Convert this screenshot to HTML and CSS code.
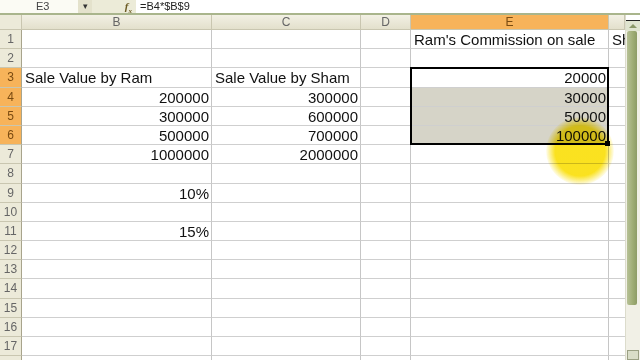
FILE: index.html
```html
<!DOCTYPE html>
<html lang="en">

<head>
  <meta charset="UTF-8" />
  <meta name="viewport" content="width=device-width, initial-scale=1.0" />
  <title>Commission Sheet</title>
  <link rel="stylesheet" href="styles.css">
</head>

<body>
  <div class="formula-bar">
    <div class="name-box">E3</div>
    <div class="name-drop">&#9662;</div>
    <div class="fx-area"><span class="fx">f<sub>x</sub></span></div>
    <div class="formula">=B4*$B$9</div>
  </div>

  <div class="workspace">
    <div class="sheet" id="sheet">
      <div class="selection"></div>
      <div class="spot"></div>
    </div>

    <div class="vscroll">
      <div class="scroll-gap"></div>
      <div class="scroll-up"></div>
      <div class="scroll-thumb"></div>
      <div class="scroll-track"></div>
      <div class="scroll-down"></div>
    </div>
  </div>

  <script>
    const sheet = document.getElementById('sheet');
    const cols = ['B', 'C', 'D', 'E', 'F'];

    // isi sel: [baris][kolom] = { t: teks, n: angka rata kanan }
    const data = {
      1: { E: { t: "Ram's Commission on sale" }, F: { t: "Sham's Commission on sale" } },
      3: { B: { t: 'Sale Value by Ram' }, C: { t: 'Sale Value by Sham' }, E: { t: '20000', n: true } },
      4: { B: { t: '200000', n: true }, C: { t: '300000', n: true }, E: { t: '30000', n: true } },
      5: { B: { t: '300000', n: true }, C: { t: '600000', n: true }, E: { t: '50000', n: true } },
      6: { B: { t: '500000', n: true }, C: { t: '700000', n: true }, E: { t: '100000', n: true } },
      7: { B: { t: '1000000', n: true }, C: { t: '2000000', n: true } },
      9: { B: { t: '10%', n: true } },
      11: { B: { t: '15%', n: true } }
    };

    function cell(cls, text) {
      const el = document.createElement('div');
      el.className = cls;
      if (text) el.textContent = text;
      sheet.appendChild(el);
    }

    cell('corner');
    cols.forEach(c => cell('col-hdr' + (c === 'E' ? ' sel' : ''), c === 'F' ? '' : c));

    for (let r = 1; r <= 18; r++) {
      const picked = r >= 3 && r <= 6;
      cell('row-hdr' + (picked ? ' sel' : ''), String(r));
      cols.forEach(c => {
        const v = (data[r] || {})[c];
        let cls = 'cell';
        if (v && v.n) cls += ' num';
        if (c === 'E' && r >= 4 && r <= 6) cls += ' range';
        if (c === 'F') cls += ' clip';
        cell(cls, v ? v.t : '');
      });
    }
  </script>
</body>

</html>
```

FILE: styles.css
```css
body {
  margin: 0;
  width: 640px;
  height: 360px;
  overflow: hidden;
  background: #fff;
  font-family: "Liberation Sans", Arial, sans-serif;
}

/* Baris rumus di atas */
.formula-bar {
  display: flex;
  height: 13px;
  background: #f6f5ea;
  border-bottom: 2px solid #a9b58c;
  font-size: 11px;
  line-height: 13px;
  color: #444;
}

.name-box {
  width: 78px;
  padding-left: 36px;
  box-sizing: border-box;
  background: #fbfbf4;
}

.name-drop {
  width: 14px;
  background: #e4e2cc;
  font-size: 9px;
  text-align: center;
  color: #333;
}

.fx-area {
  width: 44px;
  background: #ecebd8;
  text-align: right;
  padding-right: 4px;
  box-sizing: border-box;
}

.fx {
  font-family: "Liberation Serif", serif;
  font-style: italic;
  font-weight: bold;
  color: #6b5a22;
}

.fx sub {
  font-size: 7px;
}

.formula {
  flex: 1;
  background: #fff;
  padding-left: 4px;
  color: #222;
}

.workspace {
  display: flex;
}

/* Lembar kerja */
.sheet {
  position: relative;
  display: grid;
  grid-template-columns: 22px 190px 149px 50px 198px 16px;
  grid-template-rows: 15px;
  grid-auto-rows: 19.2px;
  width: 625px;
}

.corner,
.col-hdr,
.row-hdr {
  background: #ecead9;
  color: #666;
  font-size: 12px;
  text-align: center;
  box-sizing: border-box;
  border-right: 1px solid #c9c6b0;
  border-bottom: 1px solid #c9c6b0;
}

.col-hdr {
  line-height: 14px;
  background: linear-gradient(#f2f0e4, #e3e0cc);
}

.row-hdr {
  line-height: 19px;
  border-right: 1px solid #a8a48c;
}

.col-hdr.sel,
.row-hdr.sel {
  background: #f7b35a;
  color: #7a4a10;
}

.cell {
  box-sizing: border-box;
  border-right: 1px solid #c6c6c6;
  border-bottom: 1px solid #cfcfcf;
  font-size: 15px;
  line-height: 19px;
  padding: 0 2px 0 3px;
  white-space: nowrap;
  color: #111;
}

.cell.num {
  text-align: right;
}

.cell.range {
  background: #d6d4c8;
}

.cell.clip {
  overflow: hidden;
  border-right: none;
}

/* bingkai pilihan E3:E6, menumpuk di atas sel */
.selection {
  position: absolute;
  grid-column: 5 / 6;
  grid-row: 4 / 8;
  top: -1px;
  left: -1px;
  right: 0;
  bottom: 0;
  border: 2px solid #000;
  z-index: 2;
  pointer-events: none;
}

.selection::after {
  content: "";
  position: absolute;
  right: -3px;
  bottom: -3px;
  width: 5px;
  height: 5px;
  background: #000;
}

/* sorotan kursor kuning */
.spot {
  position: absolute;
  left: 546px;
  top: 102px;
  width: 68px;
  height: 68px;
  border-radius: 50%;
  background: radial-gradient(circle, rgba(250, 224, 20, 0.95) 52%, rgba(250, 224, 20, 0) 72%);
  mix-blend-mode: multiply;
  z-index: 3;
}

/* Scrollbar kanan */
.vscroll {
  width: 15px;
  height: 345px;
  display: flex;
  flex-direction: column;
  background: #f1f0e6;
  border-left: 1px solid #dcdccc;
  box-sizing: border-box;
}

.scroll-gap {
  height: 5px;
  background: #fff;
  border-bottom: 1px solid #222;
}

.scroll-up {
  position: relative;
  height: 10px;
  background: #dfe4cf;
}

.scroll-up::before {
  content: "";
  position: absolute;
  left: 3px;
  top: 3px;
  border-left: 4px solid transparent;
  border-right: 4px solid transparent;
  border-bottom: 4px solid #8a9868;
}

.scroll-thumb {
  height: 274px;
  margin: 0 3px 0 1px;
  background: linear-gradient(90deg, #b7c196, #9eac74 60%, #8d9c66);
  border-radius: 2px;
}

.scroll-track {
  flex: 1;
}

.scroll-down {
  height: 8px;
  margin: 0 1px;
  background: #d9ddc8;
  border: 1px solid #9aa084;
}
```
